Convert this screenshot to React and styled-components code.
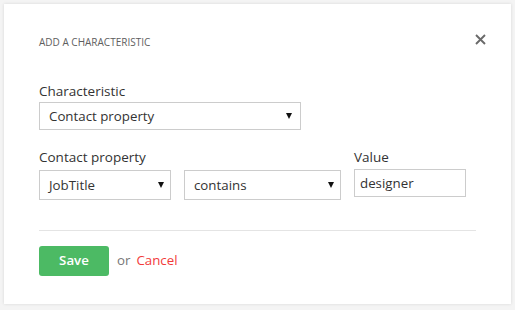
import React from 'react'
import styled, { createGlobalStyle } from 'styled-components'

const GlobalStyle = createGlobalStyle`
    html, body {
        margin: 0;
        padding: 0;
        background-color: #f4f4f4;
    }
    body {
        font-family: 'Open Sans', 'Liberation Sans', sans-serif;
    }
`

const Card = styled.div`
    margin: 4px;
    width: 507px;
    box-sizing: border-box;
    background-color: #ffffff;
    box-shadow: 0 0 3px rgba(0, 0, 0, 0.12);
    padding: 31px 35px 28px 35px;
`

const Header = styled.div`
    display: flex;
    justify-content: space-between;
    align-items: center;
    height: 14px;
    margin-bottom: 33px;
`

const Titulo = styled.h2`
    margin: 0;
    font-size: 10px;
    line-height: 14px;
    font-weight: 400;
    text-transform: uppercase;
    color: #5e5e5e;
`

const BtnFechar = styled.button`
    display: flex;
    padding: 0;
    margin: -5px -10px 0 0;
    border: none;
    background: none;
    cursor: pointer;
`

const Campo = styled.div`
    display: flex;
    flex-direction: column;
`

const Rotulo = styled.label`
    font-size: 13.5px;
    line-height: 18px;
    color: #333333;
    margin-bottom: ${props => props.gap || 2}px;
`

const Linha = styled.div`
    display: flex;
    gap: 13px;
    margin-top: 18px;
`

const Controles = styled.div`
    display: flex;
    gap: 13px;
`

const SelectBox = styled.div`
    box-sizing: border-box;
    width: ${props => props.width}px;
    height: ${props => props.height || 30}px;
    display: flex;
    align-items: center;
    justify-content: space-between;
    padding: 0 ${props => props.arrowRight || 6}px 0 9px;
    border: 1px solid #cccccc;
    background-color: #ffffff;
    font-size: 13.3px;
    color: #333333;
    cursor: pointer;
`

const Seta = styled.span`
    width: 0;
    height: 0;
    border-left: 3px solid transparent;
    border-right: 3px solid transparent;
    border-top: 6px solid #111111;
`

const Entrada = styled.input`
    box-sizing: border-box;
    width: 112px;
    height: 28px;
    margin: -1px 0 0 0;
    padding: 0 5px;
    border: 1px solid #cccccc;
    font-family: 'Open Sans', 'Liberation Sans', sans-serif;
    font-size: 13.3px;
    color: #333333;
    outline: none;
`

const Divisor = styled.hr`
    margin: 30px 0 0 0;
    border: none;
    border-top: 1px solid #e4e4e4;
`

const Rodape = styled.div`
    display: flex;
    align-items: center;
    margin-top: 15px;
    font-size: 13.3px;
`

const BtnSalvar = styled.button`
    width: 70px;
    height: 30px;
    padding: 0 0 2px 0;
    border: none;
    border-radius: 3px;
    background-color: #4cba64;
    color: #ffffff;
    font-family: 'Open Sans', 'Liberation Sans', sans-serif;
    font-size: 13.3px;
    font-weight: 600;
    cursor: pointer;
`

const Ou = styled.span`
    color: #777777;
    margin: 0 6px 3px 8px;
`

const LinkCancelar = styled.a`
    color: #f23a3a;
    text-decoration: none;
    margin-bottom: 3px;
    cursor: pointer;
`

function Select({ value, width, height, arrowRight }) {
  return (
    <SelectBox width={width} height={height} arrowRight={arrowRight}>
      <span>{value}</span>
      <Seta />
    </SelectBox>
  )
}

export default function App() {
  return (
    <>
      <GlobalStyle />
      <Card>
        <Header>
          <Titulo>Add a characteristic</Titulo>
          <BtnFechar aria-label="Fechar">
            <svg width="11" height="11" viewBox="0 0 11 11">
              <path d="M1 1 L10 10 M10 1 L1 10" stroke="#6a6a6a" strokeWidth="1.9" fill="none" />
            </svg>
          </BtnFechar>
        </Header>

        <Campo>
          <Rotulo>Characteristic</Rotulo>
          <Select value="Contact property" width={262} height={28} arrowRight={8} />
        </Campo>

        <Linha>
          <Campo>
            <Rotulo gap={4}>Contact property</Rotulo>
            <Controles>
              <Select value="JobTitle" width={132} />
              <Select value="contains" width={157} />
            </Controles>
          </Campo>
          <Campo>
            <Rotulo gap={4}>Value</Rotulo>
            <Entrada defaultValue="designer" />
          </Campo>
        </Linha>

        <Divisor />

        <Rodape>
          <BtnSalvar>Save</BtnSalvar>
          <Ou>or</Ou>
          <LinkCancelar>Cancel</LinkCancelar>
        </Rodape>
      </Card>
    </>
  )
}
